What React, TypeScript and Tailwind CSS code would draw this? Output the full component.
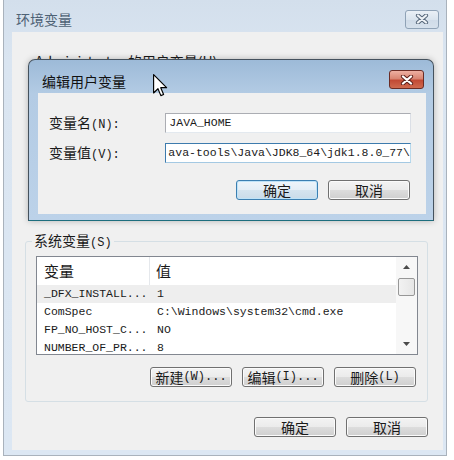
import React from "react";

const cjk = "font-['Noto_Sans_CJK_SC',sans-serif]";
const mono = "font-['Liberation_Mono','Noto_Sans_CJK_SC',monospace]";

function Lat({ children }: { children: React.ReactNode }) {
  return <span className={`${mono} text-[12px]`}>{children}</span>;
}

function CloseX({ inactive }: { inactive?: boolean }) {
  return (
    <svg width="14" height="10" viewBox="0 0 14 10">
      <path
        d="M3 1.5 L11 8.5 M11 1.5 L3 8.5"
        stroke={inactive ? "#56677a" : "#5e211b"}
        strokeWidth="4.2"
        strokeLinecap="round"
      />
      <path
        d="M3 1.5 L11 8.5 M11 1.5 L3 8.5"
        stroke={inactive ? "#eef2f6" : "#ffffff"}
        strokeWidth="2.3"
        strokeLinecap="round"
      />
    </svg>
  );
}

function Btn({ children, def = false }: { children: React.ReactNode; def?: boolean }) {
  return (
    <div
      className={`w-[82px] h-[20px] rounded-[3px] border flex items-center justify-center text-[14px] leading-[18px] text-[#1a1a1a] ${cjk} ${
        def
          ? "border-[#3c7fb1] shadow-[inset_0_0_0_1px_#bfe3f8] bg-[linear-gradient(#eef5fa,#e4eef6_50%,#d5e4ef_50%,#c9dbe9)]"
          : "border-[#707070] shadow-[inset_0_0_0_1px_#fbfbfb] bg-[linear-gradient(#f3f3f3,#ebebeb_50%,#dddddd_50%,#cfcfcf)]"
      }`}
    >
      {children}
    </div>
  );
}

const rows = [
  ["_DFX_INSTALL...", "1"],
  ["ComSpec", "C:\\Windows\\system32\\cmd.exe"],
  ["FP_NO_HOST_C...", "NO"],
  ["NUMBER_OF_PR...", "8"],
];

function Arrow({ up }: { up?: boolean }) {
  return (
    <svg width="7" height="4" viewBox="0 0 7 4">
      <path d={up ? "M0 4 L3.5 0 L7 4 Z" : "M0 0 L7 0 L3.5 4 Z"} fill="#4a4a4a" />
    </svg>
  );
}

export default function App() {
  return (
    <div className="relative w-[454px] h-[460px] bg-white overflow-hidden">
      {/* outer window: 环境变量 */}
      <div className="ml-[3px] w-[444px] h-[456px] border-x border-b border-[#a9b2bc] bg-[linear-gradient(#d3dfec,#dae5f1_60px,#dce7f3)] flex flex-col">
        <div className="h-[32px] pt-[6px] flex items-center justify-between pl-[12px] pr-[7px]">
          <span className={`${cjk} text-[14px] leading-[18px] text-[#4e6275]`}>环境变量</span>
          <div className="w-[34px] h-[19px] rounded-[3px] border border-[#8fa2b6] bg-[linear-gradient(#eaf0f6,#dae4ee_50%,#cfdbe8_50%,#d6e1ec)] flex items-center justify-center">
            <CloseX inactive />
          </div>
        </div>

        <div className="ml-[8px] mr-[3px] h-[418px] bg-[#f0f0f0] flex flex-col">
          <div className="h-[200px] pt-[17px] pl-[23px]">
            <span className={`${cjk} text-[14px] leading-[18px] text-[#1a1a1a]`}>
              Administrator 的用户变量(U)
            </span>
          </div>

          <fieldset className="ml-[13px] w-[403px] border border-[#d5dfe5] rounded-[3px] pb-[14px]">
            <legend className={`ml-[6px] px-[2px] ${cjk} text-[14px] leading-[16px] text-[#1a1a1a]`}>
              系统变量<Lat>(S)</Lat>
            </legend>

            <div className="ml-[10px] mt-[5px] w-[382px] h-[99px] border border-[#828790] bg-white flex overflow-hidden">
              <div className="flex-1 flex flex-col">
                <div className="h-[28px] shrink-0 flex items-center">
                  <div className={`w-[113px] h-full flex items-center pl-[7px] border-r border-[#e5e8ec] ${cjk} text-[15px] leading-[18px] text-[#1a1a1a]`}>
                    变量
                  </div>
                  <div className={`pl-[6px] ${cjk} text-[15px] leading-[18px] text-[#1a1a1a]`}>值</div>
                </div>
                {rows.map((r, i) => (
                  <div
                    key={i}
                    className={`h-[18px] shrink-0 flex items-center ${mono} text-[11.5px] leading-[18px] text-[#1a1a1a] whitespace-nowrap ${
                      i === 0 ? "bg-[#eeeeee]" : ""
                    }`}
                  >
                    <div className="w-[114px] pl-[7px]">{r[0]}</div>
                    <div className="pl-[6px]">{r[1]}</div>
                  </div>
                ))}
              </div>
              <div className="w-[21px] shrink-0 bg-[#f7f7f7] flex flex-col items-center">
                <div className="h-[20px] flex items-center justify-center">
                  <Arrow up />
                </div>
                <div className="w-[17px] h-[18px] mt-[1px] rounded-[2px] border border-[#979797] bg-[linear-gradient(90deg,#f2f2f2,#e6e6e6)]" />
                <div className="flex-1" />
                <div className="h-[20px] flex items-center justify-center">
                  <Arrow />
                </div>
              </div>
            </div>

            <div className="mt-[12px] flex justify-end gap-[10px] pr-[11px]">
              <Btn>
                新建<Lat>(W)...</Lat>
              </Btn>
              <Btn>
                编辑<Lat>(I)...</Lat>
              </Btn>
              <Btn>
                删除<Lat>(L)</Lat>
              </Btn>
            </div>
          </fieldset>

          <div className="mt-[15px] flex justify-end gap-[10px] pr-[15px]">
            <Btn>确定</Btn>
            <Btn>取消</Btn>
          </div>
        </div>
      </div>

      {/* inner dialog: 编辑用户变量 */}
      <div className="absolute left-[28px] top-[59px] w-[406px] h-[162px] rounded-t-[7px] border border-[#45525e] border-b-[#1d6e7e] bg-[linear-gradient(#9dbad8,#b3cbe4_34px,#bcd2e9)] flex flex-col shadow-[0_0_6px_rgba(0,0,0,0.25)]">
        <div className="h-[33px] flex items-start justify-between pl-[13px] pr-[9px]">
          <span className={`pt-[12px] ${cjk} text-[14px] leading-[18px] text-[#111]`}>编辑用户变量</span>
          <div className="mt-[10px] w-[35px] h-[19px] rounded-[3px] border border-[#6b2c25] bg-[linear-gradient(#eeb0a2,#d98673_45%,#c24a35_55%,#cf6a4f)] flex items-center justify-center">
            <CloseX />
          </div>
        </div>

        <div className="ml-[9px] mr-[7px] h-[121px] bg-[#f0f0f0] pt-[20px] pl-[11px] pr-[15px] flex flex-col">
          <div className="flex items-center h-[20px]">
            <div className={`w-[117px] ${cjk} text-[14px] leading-[18px] text-[#1a1a1a]`}>
              变量名<Lat>(N):</Lat>
            </div>
            <div className={`w-[247px] h-[20px] border border-[#abadb3] border-b-[#e3e9ef] border-r-[#dbdfe6] bg-white pl-[3px] flex items-center ${mono} text-[11.5px] text-[#1a1a1a]`}>
              JAVA_HOME
            </div>
          </div>
          <div className="flex items-center h-[20px] mt-[10px]">
            <div className={`w-[117px] ${cjk} text-[14px] leading-[18px] text-[#1a1a1a]`}>
              变量值<Lat>(V):</Lat>
            </div>
            <div className={`w-[247px] h-[20px] border border-[#3d7bad] border-b-[#a4c9e3] border-r-[#b7d9ed] bg-white pl-[2px] flex items-center overflow-hidden whitespace-nowrap ${mono} text-[11.5px] text-[#1a1a1a]`}>
              ava-tools\Java\JDK8_64\jdk1.8.0_77\
            </div>
          </div>
          <div className="mt-[17px] flex justify-end gap-[10px] pr-[1px]">
            <Btn def>确定</Btn>
            <Btn>取消</Btn>
          </div>
        </div>
      </div>

      {/* mouse pointer */}
      <svg width="15" height="23" viewBox="0 0 13 20" className="absolute left-[153px] top-[74px]">
        <path
          d="M0.5 0.5 V16.5 L4.3 12.8 L6.8 18.8 L9.2 17.8 L6.7 11.9 H11.8 Z"
          fill="#ffffff"
          stroke="#000000"
          strokeWidth="1"
          strokeLinejoin="round"
        />
      </svg>
    </div>
  );
}
